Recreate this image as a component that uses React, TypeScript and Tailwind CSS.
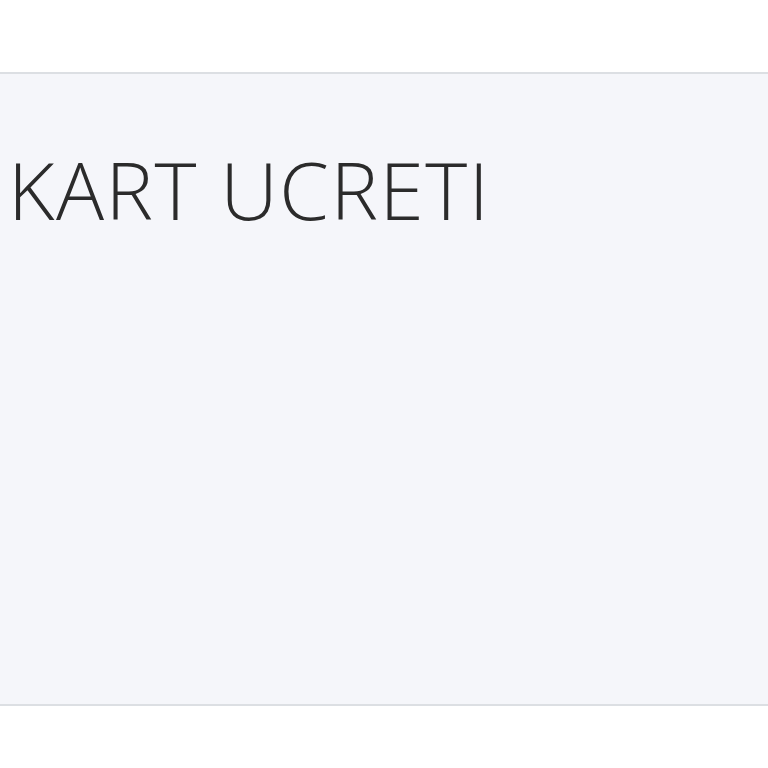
import React from 'react';

const App: React.FC = () => {
  return (
    <div className="w-[768px] h-[768px] bg-white" style={{ fontFamily: '"Open Sans", sans-serif' }}>
      <div className="h-[72px]" />
      <section className="h-[634px] bg-[#f5f6fa] border-y-2 border-[#dcdfe3] pt-[75px] pl-[8px]">
        <h1 className="text-[80px] leading-[80px] font-light text-[#2b2b2b] tracking-[1.5px]">KART UCRETI</h1>
      </section>
    </div>
  );
};

export default App;
